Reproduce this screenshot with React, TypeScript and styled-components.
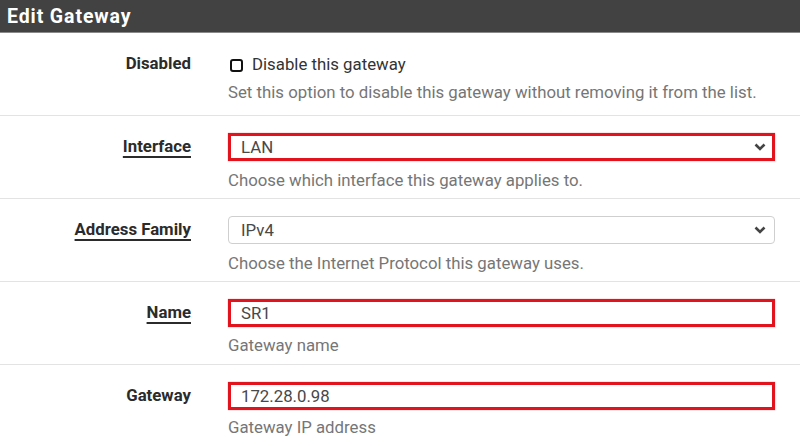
import React from "react";
import styled, { createGlobalStyle } from "styled-components";

const Global = createGlobalStyle`
  html, body { margin: 0; padding: 0; background: #fff; }
  body { font-family: Roboto, "Noto Sans", sans-serif; }
`;

const Panel = styled.div`
  width: 800px;
  height: 446px;
  overflow: hidden;
  background: #fff;
`;

const Header = styled.div`
  height: 32px;
  background: #424242;
  border-bottom: 1px solid #8a8a8a;
  display: flex;
  align-items: center;
  padding-left: 7px;
  color: #fff;
  font-weight: 700;
  font-size: 19.5px;
  letter-spacing: 0.9px;
`;

const Row = styled.div<{ $last?: boolean }>`
  display: grid;
  grid-template-columns: 191px 1fr;
  column-gap: 37px;
  padding: 17px 25px 0 0;
  height: 83px;
  box-sizing: border-box;
  border-bottom: ${(p) => (p.$last ? "none" : "1px solid #e3e3e3")};
`;

const Label = styled.div<{ $u?: boolean }>`
  text-align: right;
  font-weight: 700;
  font-size: 16.8px;
  color: #2b2b2b;
  line-height: 26px;
  height: 28px;
  span {
    text-decoration: ${(p) => (p.$u ? "underline" : "none")};
    text-decoration-thickness: 2px;
    text-underline-offset: 4px;
  }
`;

const Control = styled.div`
  display: flex;
  flex-direction: column;
`;

const CheckLine = styled.label`
  display: flex;
  align-items: center;
  height: 28px;
  gap: 9px;
  padding-left: 2px;
  font-size: 16.8px;
  color: #333;
`;

const Box = styled.span`
  width: 9px;
  height: 9px;
  border: 2px solid #111;
  border-radius: 3px;
  margin-top: 2px;
`;

const Field = styled.div<{ $red?: boolean }>`
  height: 28px;
  box-sizing: border-box;
  border: ${(p) => (p.$red ? "3px solid #e3131d" : "1px solid #cfcfcf")};
  box-shadow: ${(p) => (p.$red ? "0 0 1px rgba(227,19,29,0.6)" : "none")};
  border-radius: ${(p) => (p.$red ? "0" : "4px")};
  display: flex;
  align-items: center;
  justify-content: space-between;
  padding: 0 ${(p) => (p.$red ? "6px" : "8px")} 0 ${(p) => (p.$red ? "10px" : "12px")};
  font-size: 16.8px;
  color: #484848;
`;

const Help = styled.div<{ $gap: number }>`
  margin-top: ${(p) => p.$gap}px;
  font-size: 16.8px;
  line-height: 20px;
  color: #767676;
`;

const Chevron = () => (
  <svg width="12" height="8" viewBox="0 0 12 8">
    <polyline points="1.5,1.5 6,6 10.5,1.5" fill="none" stroke="#444" strokeWidth="2.6" />
  </svg>
);

export default function App() {
  return (
    <Panel>
      <Global />
      <Header>Edit Gateway</Header>
      <Row>
        <Label><span>Disabled</span></Label>
        <Control>
          <CheckLine>
            <Box />
            Disable this gateway
          </CheckLine>
          <Help $gap={4}>Set this option to disable this gateway without removing it from the list.</Help>
        </Control>
      </Row>
      <Row>
        <Label $u><span>Interface</span></Label>
        <Control>
          <Field $red>
            LAN
            <Chevron />
          </Field>
          <Help $gap={9}>Choose which interface this gateway applies to.</Help>
        </Control>
      </Row>
      <Row>
        <Label $u><span>Address Family</span></Label>
        <Control>
          <Field>
            IPv4
            <Chevron />
          </Field>
          <Help $gap={9}>Choose the Internet Protocol this gateway uses.</Help>
        </Control>
      </Row>
      <Row>
        <Label $u><span>Name</span></Label>
        <Control>
          <Field $red>SR1</Field>
          <Help $gap={8}>Gateway name</Help>
        </Control>
      </Row>
      <Row $last>
        <Label><span>Gateway</span></Label>
        <Control>
          <Field $red>172.28.0.98</Field>
          <Help $gap={7}>Gateway IP address</Help>
        </Control>
      </Row>
    </Panel>
  );
}
